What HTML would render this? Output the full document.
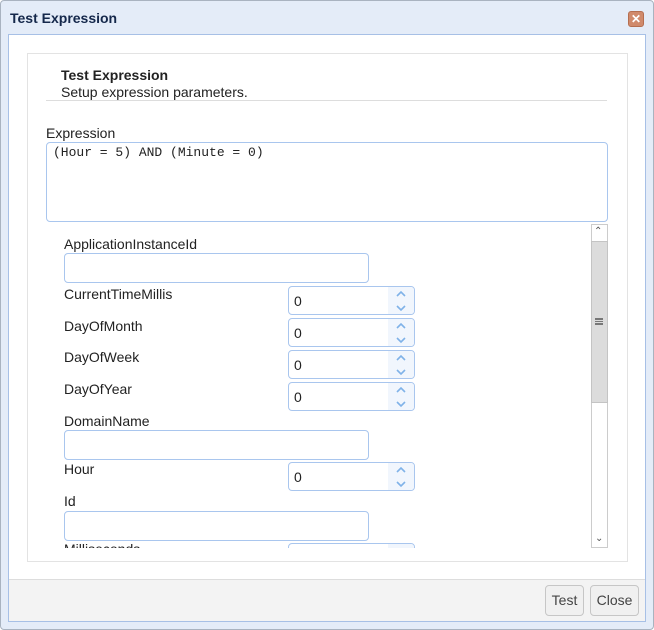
<!DOCTYPE html>
<html><head><style>
*{box-sizing:border-box;margin:0;padding:0}
body{width:654px;height:630px;background:#fff;font-family:"Liberation Sans",sans-serif;font-size:13px;color:#222;position:relative;overflow:hidden}
.a{position:absolute}
.outer{left:0;top:0;width:654px;height:630px;border:1px solid #a9b3c0;border-radius:4px;background:#e4ecf8}
.title{left:10px;top:10px;font-weight:bold;font-size:14px;color:#15284b}
.close{left:628px;top:11px;width:16px;height:16px;background:#d08a6c;border-radius:3px;border:1px solid #b56e50;color:#fff;font-size:12px;font-weight:bold;line-height:14px;text-align:center}
.body{left:8px;top:34px;width:638px;height:588px;border:1px solid #a7c0e6;background:#fff}
.footer{left:9px;top:579px;width:636px;height:42px;background:#f3f3f3;border-top:1px solid #ddd}
.panel{left:27px;top:53px;width:601px;height:509px;border:1px solid #e3e3e3}
.lbl{font-size:14px;color:#222}
.txt{width:305px;height:30px;border:1px solid #a9c6ee;border-radius:4px;background:#fff}
.spin{width:127px;height:29px;border:1px solid #a9c6ee;border-radius:4px;background:#fff;overflow:hidden}
.spin span{position:absolute;left:5px;top:6px;font-size:14px}
.spin i{position:absolute;right:0;top:0;width:26px;height:100%;background:#f1f6fd}
.spin svg{position:absolute;right:7px;top:3px}
.btn{height:31px;border:1px solid #c6c6c6;border-radius:4px;background:#f0f0f0;font-size:14px;color:#444;text-align:center;line-height:29px}
</style></head><body>
<div class="a outer"></div>
<div class="a title">Test Expression</div>
<div class="a close">✕</div>
<div class="a body"></div>
<div class="a footer"></div>
<div class="a panel"></div>
<div class="a" style="left:61px;top:67px;font-weight:bold;font-size:14px">Test Expression</div>
<div class="a" style="left:61px;top:84px;font-size:14px">Setup expression parameters.</div>
<div class="a" style="left:46px;top:100px;width:561px;height:1px;background:#ddd"></div>
<div class="a lbl" style="left:46px;top:125px">Expression</div>
<div class="a" style="left:46px;top:142px;width:562px;height:80px;border:1px solid #a9c6ee;border-radius:4px"></div>
<div class="a" style="left:53px;top:145px;font-family:'Liberation Mono',monospace;font-size:13px">(Hour = 5) AND (Minute = 0)</div>

<div class="a" style="left:28px;top:224px;width:563px;height:324px;overflow:hidden">
 <div class="a lbl" style="left:36px;top:12px">ApplicationInstanceId</div>
 <div class="a txt" style="left:36px;top:29px;width:305px"></div>
 <div class="a lbl" style="left:36px;top:62px">CurrentTimeMillis</div>
 <div class="a spin" style="left:260px;top:62px"><i></i><span>0</span><svg width="12" height="22"><path d="M2 6l4-4 4 4M2 16l4 4 4-4" fill="none" stroke="#7fb2e8" stroke-width="1.6"/></svg></div>
 <div class="a lbl" style="left:36px;top:94px">DayOfMonth</div>
 <div class="a spin" style="left:260px;top:94px"><i></i><span>0</span><svg width="12" height="22"><path d="M2 6l4-4 4 4M2 16l4 4 4-4" fill="none" stroke="#7fb2e8" stroke-width="1.6"/></svg></div>
 <div class="a lbl" style="left:36px;top:125px">DayOfWeek</div>
 <div class="a spin" style="left:260px;top:126px"><i></i><span>0</span><svg width="12" height="22"><path d="M2 6l4-4 4 4M2 16l4 4 4-4" fill="none" stroke="#7fb2e8" stroke-width="1.6"/></svg></div>
 <div class="a lbl" style="left:36px;top:157px">DayOfYear</div>
 <div class="a spin" style="left:260px;top:158px"><i></i><span>0</span><svg width="12" height="22"><path d="M2 6l4-4 4 4M2 16l4 4 4-4" fill="none" stroke="#7fb2e8" stroke-width="1.6"/></svg></div>
 <div class="a lbl" style="left:36px;top:189px">DomainName</div>
 <div class="a txt" style="left:36px;top:206px"></div>
 <div class="a lbl" style="left:36px;top:237px">Hour</div>
 <div class="a spin" style="left:260px;top:238px"><i></i><span>0</span><svg width="12" height="22"><path d="M2 6l4-4 4 4M2 16l4 4 4-4" fill="none" stroke="#7fb2e8" stroke-width="1.6"/></svg></div>
 <div class="a lbl" style="left:36px;top:269px">Id</div>
 <div class="a txt" style="left:36px;top:287px"></div>
 <div class="a lbl" style="left:36px;top:317px">Milliseconds</div>
 <div class="a spin" style="left:260px;top:319px"><i></i></div>
</div>
<div class="a" style="left:591px;top:224px;width:17px;height:324px;border:1px solid #ccc;background:#fff"></div>
<div class="a" style="left:594px;top:226px;font-size:10px;color:#555">⌃</div>
<div class="a" style="left:591px;top:241px;width:17px;height:162px;background:#dcdcdc;border:1px solid #c4c4c4"></div>
<div class="a" style="left:595px;top:318px;width:8px;height:7px;border-top:2px solid #777;border-bottom:2px solid #777"></div>
<div class="a" style="left:595px;top:321px;width:8px;height:1px;background:#777"></div>
<div class="a" style="left:595px;top:533px;font-size:10px;color:#555">⌄</div>

<div class="a btn" style="left:545px;top:585px;width:39px">Test</div>
<div class="a btn" style="left:590px;top:585px;width:49px">Close</div>
</body></html>
